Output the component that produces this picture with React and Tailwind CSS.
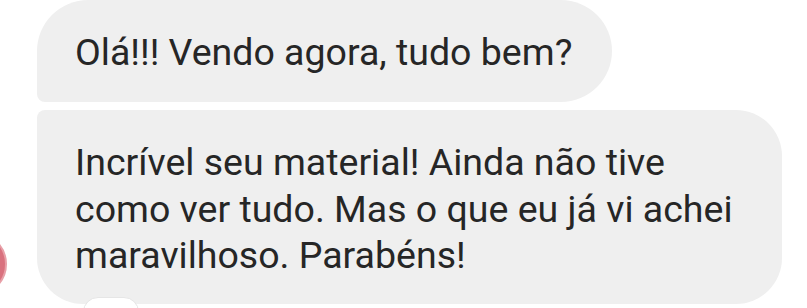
import React from 'react'

// Two received chat bubbles, cropped from a phone screenshot
export default function App() {
  return (
    <div
      className="relative w-[807px] h-[308px] overflow-hidden bg-white text-[#262626]"
      style={{ fontFamily: 'Roboto, "Noto Sans", sans-serif' }}
    >
      <div className="flex flex-col items-start gap-[8px]">
        <div className="ml-[37px] h-[102px] flex items-center rounded-[51px] rounded-bl-[8px] bg-[#efefef] pl-[38px] pr-[40px] pt-[3px] text-[37.5px] leading-[46.7px]">
          Olá!!! Vendo agora, tudo bem?
        </div>

        <div className="flex items-end gap-[30px]">
          <div className="-ml-[57px] mb-[8px] h-[64px] w-[64px] shrink-0 rounded-full border-2 border-[#e8a0a8] bg-[#d9717e]" />
          <div className="w-[745px] rounded-[46px] rounded-tl-[8px] bg-[#efefef] px-[38px] pt-[29px] pb-[25px] text-[37.5px] leading-[46.7px]">
            Incrível seu material! Ainda não tive
            <br />
            como ver tudo. Mas o que eu já vi achei
            <br />
            maravilhoso. Parabéns!
          </div>
        </div>
      </div>

      {/* reaction pill peeking in from below */}
      <div className="absolute left-[83px] top-[297px] h-[30px] w-[56px] rounded-full border border-[#e6e6e6] bg-white" />
    </div>
  )
}
